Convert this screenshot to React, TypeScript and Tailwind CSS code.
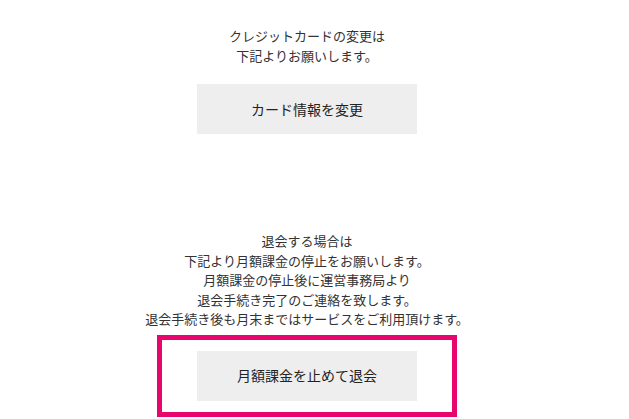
export default function App() {
  return (
    <div
      className="w-[614px] bg-white text-[#333] text-center"
      style={{ fontFamily: '"Noto Sans CJK JP", "Noto Sans", sans-serif' }}
    >
      {/* card change */}
      <section className="pt-[26px]">
        <p className="text-[13px] leading-[19.5px]">
          クレジットカードの変更は
          <br />
          下記よりお願いします。
        </p>
        <button className="mx-auto mt-[19px] flex h-[50px] w-[220px] items-center justify-center bg-[#eeeeee] text-[14px] text-[#222]">
          カード情報を変更
        </button>
      </section>

      {/* withdrawal */}
      <section className="mt-[97px]">
        <p className="text-[13px] leading-[19.5px]">
          退会する場合は
          <br />
          下記より月額課金の停止をお願いします。
          <br />
          月額課金の停止後に運営事務局より
          <br />
          退会手続き完了のご連絡を致します。
          <br />
          退会手続き後も月末まではサービスをご利用頂けます。
        </p>
        <div className="mx-auto mt-[6px] w-[300px] border-[5px] border-[#e8056d] py-[11px]">
          <button className="mx-auto flex h-[50px] w-[220px] items-center justify-center bg-[#eeeeee] text-[14px] text-[#222]">
            月額課金を止めて退会
          </button>
        </div>
      </section>
    </div>
  )
}
